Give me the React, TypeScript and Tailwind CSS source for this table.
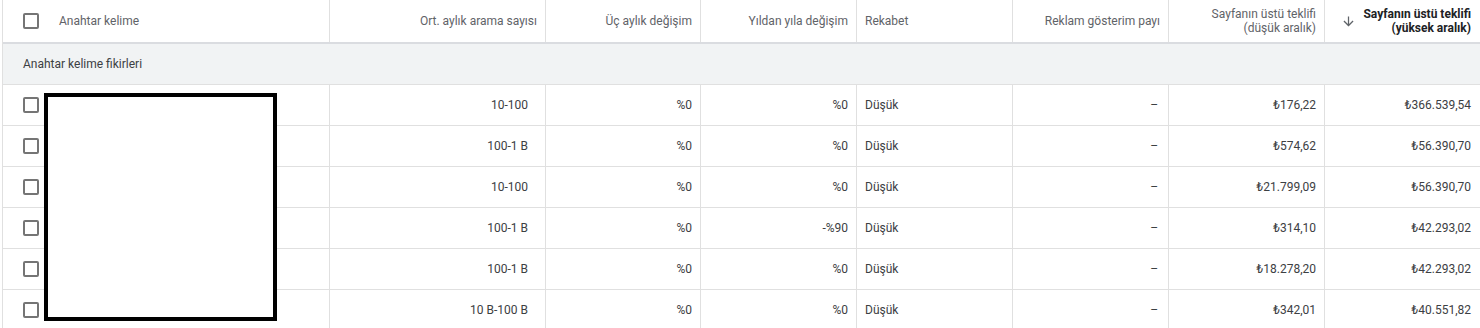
import React from 'react'

interface KeywordRow {
    searches: string
    threeMonth: string
    yoy: string
    competition: string
    share: string
    bidLow: string
    bidHigh: string
}

const rows: KeywordRow[] = [
    { searches: '10-100', threeMonth: '%0', yoy: '%0', competition: 'Düşük', share: '–', bidLow: '₺176,22', bidHigh: '₺366.539,54' },
    { searches: '100-1 B', threeMonth: '%0', yoy: '%0', competition: 'Düşük', share: '–', bidLow: '₺574,62', bidHigh: '₺56.390,70' },
    { searches: '10-100', threeMonth: '%0', yoy: '%0', competition: 'Düşük', share: '–', bidLow: '₺21.799,09', bidHigh: '₺56.390,70' },
    { searches: '100-1 B', threeMonth: '%0', yoy: '-%90', competition: 'Düşük', share: '–', bidLow: '₺314,10', bidHigh: '₺42.293,02' },
    { searches: '100-1 B', threeMonth: '%0', yoy: '%0', competition: 'Düşük', share: '–', bidLow: '₺18.278,20', bidHigh: '₺42.293,02' },
    { searches: '10 B-100 B', threeMonth: '%0', yoy: '%0', competition: 'Düşük', share: '–', bidLow: '₺342,01', bidHigh: '₺40.551,82' },
]

const gridCols = 'grid grid-cols-[327px_216px_155px_156px_156px_156px_156px_1fr]'

function Checkbox() {
    return <span className="block h-4 w-4 shrink-0 rounded-[2px] border-2 border-[#757575] bg-white" />
}

function SortArrow() {
    return (
        <svg width="15" height="15" viewBox="0 0 24 24" className="shrink-0 fill-[#5f6368]">
            <path d="M20 12l-1.41-1.41L13 16.17V4h-2v12.17l-5.58-5.59L4 12l8 8 8-8z" />
        </svg>
    )
}

export default function App() {
    const cell = 'flex items-center border-r border-[#e0e0e0]'
    const num = `${cell} justify-end pr-[8px] text-right`

    return (
        <div className="h-[328px] w-[1480px] overflow-hidden bg-white font-['Roboto','Liberation_Sans',sans-serif] text-[12px] leading-[14px] text-[#3c4043]">
            <div className="relative ml-[2px] border-l border-[#e0e0e0]">
                {/* Header */}
                <div className={`${gridCols} h-[44px] border-b-2 border-[#dadce0] text-[#5f6368]`}>
                    <div className={`${cell} gap-5 pl-5`}>
                        <Checkbox />
                        <span>Anahtar kelime</span>
                    </div>
                    <div className={num}>Ort. aylık arama sayısı</div>
                    <div className={num}>Üç aylık değişim</div>
                    <div className={num}>Yıldan yıla değişim</div>
                    <div className={`${cell} pl-[8px]`}>Rekabet</div>
                    <div className={num}>Reklam gösterim payı</div>
                    <div className={num}>
                        <span>
                            Sayfanın üstü teklifi
                            <br />
                            (düşük aralık)
                        </span>
                    </div>
                    <div className="flex items-center justify-between pl-[16px] pr-[9px] text-right">
                        <SortArrow />
                        <span className="font-bold text-[#202124]">
                            Sayfanın üstü teklifi
                            <br />
                            (yüksek aralık)
                        </span>
                    </div>
                </div>

                {/* Group row */}
                <div className="flex h-[41px] items-center border-b border-[#e0e0e0] bg-[#f1f3f4] pl-5">
                    Anahtar kelime fikirleri
                </div>

                {/* Data rows */}
                {rows.map((r, i) => (
                    <div key={i} className={`${gridCols} h-[41px] border-b border-[#e0e0e0]`}>
                        <div className={`${cell} pl-5`}>
                            <Checkbox />
                        </div>
                        <div className={`${cell} justify-end pr-[17px]`}>{r.searches}</div>
                        <div className={num}>{r.threeMonth}</div>
                        <div className={num}>{r.yoy}</div>
                        <div className={`${cell} pl-[8px]`}>{r.competition}</div>
                        <div className={`${num} pr-[10px]`}>{r.share}</div>
                        <div className={num}>{r.bidLow}</div>
                        <div className="flex items-center justify-end pr-[9px]">{r.bidHigh}</div>
                    </div>
                ))}

                {/* Redaction box over keywords */}
                <div className="absolute left-[41px] top-[93px] h-[228px] w-[233px] border-4 border-black bg-white" />
            </div>
        </div>
    )
}
